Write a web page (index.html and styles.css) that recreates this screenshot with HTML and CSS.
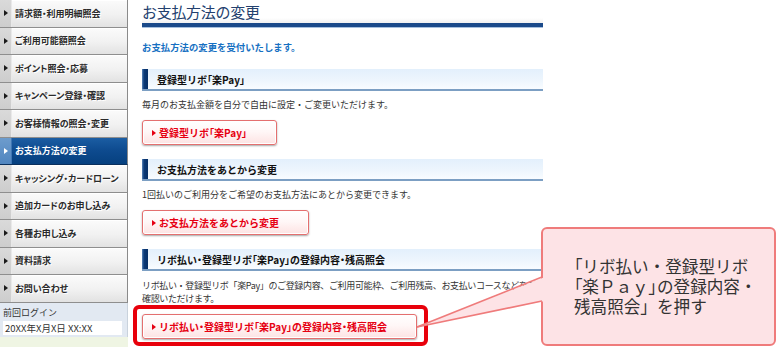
FILE: index.html
```html
<!DOCTYPE html>
<html lang="ja">
<head>
<meta charset="utf-8">
<title>お支払方法の変更</title>
<link rel="stylesheet" href="styles.css">
</head>
<body>
<div class="page">
  <nav class="side">
    <ul class="menu">
      <li class="item"><span class="strip"><span class="tri"></span></span><span class="label">請求額・利用明細照会</span></li>
      <li class="item"><span class="strip"><span class="tri"></span></span><span class="label">ご利用可能額照会</span></li>
      <li class="item"><span class="strip"><span class="tri"></span></span><span class="label">ポイント照会・応募</span></li>
      <li class="item"><span class="strip"><span class="tri"></span></span><span class="label">キャンペーン登録・確認</span></li>
      <li class="item"><span class="strip"><span class="tri"></span></span><span class="label">お客様情報の照会・変更</span></li>
      <li class="item active"><span class="strip"><span class="tri"></span></span><span class="label">お支払方法の変更</span></li>
      <li class="item"><span class="strip"><span class="tri"></span></span><span class="label">キャッシング・カードローン</span></li>
      <li class="item"><span class="strip"><span class="tri"></span></span><span class="label">追加カードのお申し込み</span></li>
      <li class="item"><span class="strip"><span class="tri"></span></span><span class="label">各種お申し込み</span></li>
      <li class="item"><span class="strip"><span class="tri"></span></span><span class="label">資料請求</span></li>
      <li class="item"><span class="strip"><span class="tri"></span></span><span class="label">お問い合わせ</span></li>
    </ul>
    <div class="login">
      <div class="login-label">前回ログイン</div>
      <div class="login-box">20XX年X月X日 XX:XX</div>
    </div>
    <div class="side-foot"></div>
  </nav>

  <main class="main">
    <h1 class="title">お支払方法の変更</h1>
    <p class="lead">お支払方法の変更を受付いたします。</p>

    <h2 class="sec-head">登録型リボ<span class="p">「</span>楽Pay<span class="p">」</span></h2>
    <p class="desc">毎月のお支払金額を自分で自由に設定・ご変更いただけます。</p>
    <a class="btn"><span class="btn-tri"></span>登録型リボ<span class="p">「</span>楽Pay<span class="p">」</span></a>

    <h2 class="sec-head">お支払方法をあとから変更</h2>
    <p class="desc">1回払いのご利用分をご希望のお支払方法にあとから変更できます。</p>
    <a class="btn"><span class="btn-tri"></span>お支払方法をあとから変更</a>

    <h2 class="sec-head">リボ払い<span class="p">・</span>登録型リボ<span class="p">「</span>楽Pay<span class="p">」</span>の登録内容<span class="p">・</span>残高照会</h2>
    <p class="desc two">リボ払い・登録型リボ「楽Pay」のご登録内容、ご利用可能枠、ご利用残高、お支払いコースなどをご<br>確認いただけます。</p>
    <a class="btn"><span class="btn-tri"></span>リボ払い<span class="p">・</span>登録型リボ<span class="p">「</span>楽Pay<span class="p">」</span>の登録内容<span class="p">・</span>残高照会</a>
  </main>

  <div class="frame"></div>
  <div class="callout"><span class="p">「</span>リボ払い・登録型リボ<br><span class="p">「</span>楽Ｐａｙ<span class="p">」</span>の登録内容・<br>残高照会」を押す</div>
  <svg class="tail" width="140" height="70" viewBox="0 0 140 70">
    <polygon points="3,62 131,12 131,36" fill="#fde3e6"/>
    <line x1="3" y1="62" x2="128" y2="12" stroke="#ef7b7b" stroke-width="1.6"/>
    <line x1="3" y1="62" x2="128" y2="36" stroke="#ef7b7b" stroke-width="1.6"/>
  </svg>
</div>
</body>
</html>
```

FILE: styles.css
```css
* { box-sizing: border-box; }

html, body {
  margin: 0;
  padding: 0;
  background: #fff;
  font-family: "Noto Sans CJK JP", "Noto Sans", sans-serif;
  color: #333;
}

.page {
  position: relative;
  width: 776px;
  height: 347px;
  overflow: hidden;
  display: flex;
  align-items: flex-start;
}

.p {
  font-feature-settings: "palt" 1;
}

/* ---------- sidebar ---------- */
.side {
  width: 128px;
  flex: none;
  display: flex;
  flex-direction: column;
  height: 347px;
}

.menu {
  list-style: none;
  margin: 0;
  padding: 0;
}

.item {
  display: flex;
  align-items: stretch;
  height: 27.5px;
  border-bottom: 1px solid #8e8e8e;
  border-right: 1px solid #8a8a8a;
  background: linear-gradient(#fbfbfb, #f1f1f1 55%, #e2e2e2);
  box-shadow: inset 0 1px 0 #ffffff;
}

.strip {
  width: 12px;
  flex: none;
  display: flex;
  align-items: center;
  justify-content: flex-start;
  padding-left: 4px;
  background: linear-gradient(#dadada, #cdcdcd);
  border-right: 1px solid #e9e9e9;
}

.tri {
  width: 0;
  height: 0;
  border-left: 4px solid #1a1a1a;
  border-top: 3px solid transparent;
  border-bottom: 3px solid transparent;
}

.label {
  display: flex;
  align-items: center;
  padding-left: 3px;
  font-size: 9px;
  font-weight: bold;
  color: #2a2a2a;
  white-space: nowrap;
  font-feature-settings: "palt" 1;
  text-shadow: 1px 1px 0 #ffffff;
}

.item.active {
  background: linear-gradient(#1b5da3, #0d4a8e 50%, #06407f);
  border-bottom-color: #0a2f5c;
  box-shadow: none;
}

.item.active .strip {
  background: linear-gradient(#6d9ccd, #5085bf);
  border-right-color: #3f76b3;
}

.item.active .tri {
  border-left-color: #ffffff;
}

.item.active .label {
  color: #ffffff;
  text-shadow: none;
}

.login {
  background: #e2e9f2;
  padding: 4px 5px 3px 3px;
  border-right: 1px solid #c9d2dc;
  height: 34px;
}

.login-label {
  font-size: 9px;
  line-height: 12px;
  color: #333;
}

.login-box {
  margin-top: 2px;
  background: #ffffff;
  height: 14px;
  padding-left: 2px;
  font-size: 9.5px;
  line-height: 14px;
  color: #333;
}

.side-foot {
  flex: 1;
  background: #eff5e3;
}

/* ---------- main ---------- */
.main {
  margin-left: 14px;
  width: 401px;
  flex: none;
  display: flex;
  flex-direction: column;
  align-items: flex-start;
}

.title {
  margin: 0;
  width: 401px;
  height: 27px;
  padding-top: 3px;
  font-size: 15px;
  line-height: 18px;
  font-weight: normal;
  color: #23406e;
  letter-spacing: -0.3px;
  background: linear-gradient(#ffffff 18px, #f1f1f1 23px, #f1f1f1 23px);
  border-bottom: 4px solid #1b4a8a;
  box-shadow: 0 1px 0 #a7c0de;
}

.lead {
  margin: 14px 0 0;
  font-size: 9.4px;
  line-height: 12px;
  font-weight: bold;
  color: #1670c2;
}

.sec-head {
  margin: 16px 0 0;
  width: 401px;
  height: 22px;
  padding-left: 15px;
  display: flex;
  align-items: center;
  font-size: 10px;
  font-weight: bold;
  color: #111;
  white-space: nowrap;
  background:
    linear-gradient(90deg, #5a86ba 0, #0b3a78 2px, #062f66 6px, transparent 6px),
    linear-gradient(#e3f0fc, #eef6fd 60%, #f9fcff);
  border-bottom: 2px solid #7c9fc3;
}

.lead + .sec-head { margin-top: 16px; }
.btn + .sec-head { margin-top: 14px; }

.desc {
  margin: 8px 0 0;
  font-size: 9px;
  line-height: 12px;
  color: #333;
  white-space: nowrap;
}

.desc.two {
  line-height: 13px;
  letter-spacing: -0.35px;
}

.btn {
  margin-top: 9px;
  height: 25px;
  display: flex;
  align-items: center;
  padding: 0 29px 0 9px;
  font-size: 10px;
  font-weight: bold;
  color: #e60012;
  border: 1px solid #e46f6f;
  border-radius: 3px;
  background: linear-gradient(#ffffff, #fff7f7 45%, #fde3e3);
  box-shadow: inset 0 0 0 1px #ffffff, 0 1px 2px rgba(0, 0, 0, 0.35);
  white-space: nowrap;
}

.btn-tri {
  width: 0;
  height: 0;
  margin-right: 3px;
  border-left: 4px solid #e60012;
  border-top: 3px solid transparent;
  border-bottom: 3px solid transparent;
}

/* ---------- annotation overlays ---------- */
.frame {
  position: absolute;
  left: 133px;
  top: 305px;
  width: 295px;
  height: 41px;
  border: 4px solid #e8000b;
  border-radius: 6px;
}

.callout {
  position: absolute;
  left: 541px;
  top: 227px;
  width: 235px;
  height: 119px;
  padding: 29px 0 0 31px;
  background: #fde3e6;
  border: 2px solid #ef7b7b;
  border-radius: 6px;
  font-family: "Liberation Sans", "Noto Sans CJK JP", sans-serif;
  font-size: 16.6px;
  line-height: 20px;
  color: #333;
  white-space: nowrap;
}

.tail {
  position: absolute;
  left: 414px;
  top: 265px;
}
```
